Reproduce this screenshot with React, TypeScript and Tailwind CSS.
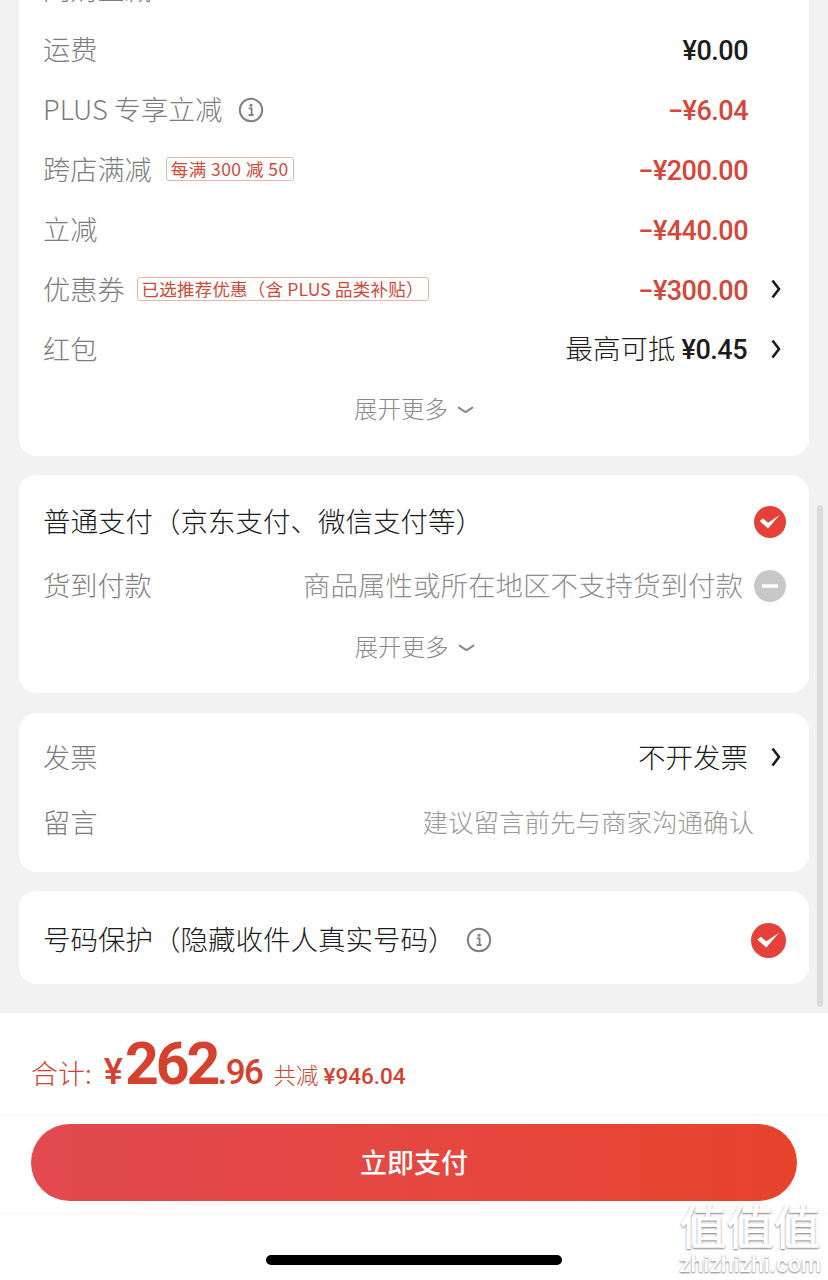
import type { ReactNode } from 'react';

const cjk = { fontFamily: '"Noto Sans CJK SC", sans-serif' };
const num = { fontFamily: 'Roboto, sans-serif' };

function Tag({ children, wide }: { children: ReactNode; wide?: boolean }) {
  return (
    <span className={`mb-[2px] flex h-6 items-center rounded-[3px] border border-[#e8b5ad] px-[4px] text-[17.5px] leading-none whitespace-pre text-[#d04a38] ${wide ? 'ml-[14px] tracking-[0.45px]' : 'ml-[12px] tracking-[0.2px]'}`}>
      {children}
    </span>
  );
}

function InfoIcon() {
  return (
    <svg width="26" height="26" viewBox="0 0 26 26" fill="none" className="text-[#808080]">
      <circle cx="13" cy="13" r="11.2" stroke="currentColor" strokeWidth="2" />
      <circle cx="13" cy="8.2" r="1.5" fill="currentColor" />
      <path d="M10.8 11.4h2.8v6.2M10.6 18h5" stroke="currentColor" strokeWidth="1.8" />
    </svg>
  );
}

function Arrow() {
  return (
    <svg width="10" height="20" viewBox="0 0 10 20" fill="none" className="mb-[2px] ml-[23px] mr-[1px]">
      <path d="M1.5 1.5 8 10 1.5 18.5" stroke="#1c1c1c" strokeWidth="2.6" />
    </svg>
  );
}

function Check({ size = 32 }: { size?: number }) {
  return (
    <svg width={size} height={size} viewBox="0 0 32 32">
      <circle cx="16" cy="16" r="16" fill="#e6403a" />
      <path d="M5.7 15 9 12.5 14 16.7 25.7 9 14 22.5Z" fill="#fff" />
    </svg>
  );
}

function Amount({ children, red }: { children: ReactNode; red?: boolean }) {
  return (
    <span className={`mt-[2px] text-[27px] font-medium tracking-[-0.5px] ${red ? 'text-[#d4473a]' : 'text-[#1c1c1c]'}`} style={num}>
      {children}
    </span>
  );
}

function Row({ label, tag, wide, info, right, arrow }: { label: string; tag?: string; wide?: boolean; info?: boolean; right: ReactNode; arrow?: boolean }) {
  return (
    <div className="flex h-[60px] items-center pl-6 pr-[27px]">
      <span className="mb-[4px] text-[27.2px] font-light whitespace-pre text-[#7d7d7d]">{label}</span>
      {info && <span className="ml-[15px] flex"><InfoIcon /></span>}
      {tag && <Tag wide={wide}>{tag}</Tag>}
      <div className={`ml-auto flex items-center ${arrow ? '' : 'mr-[34px]'}`}>
        {right}
        {arrow && <Arrow />}
      </div>
    </div>
  );
}

function More({ className }: { className: string }) {
  return (
    <div className={`flex items-center justify-center pb-[2px] text-[23.5px] font-light text-[#8a8a8a] ${className}`}>
      展开更多
      <svg width="17" height="8" viewBox="0 0 17 8" className="ml-[9px] mt-[2px]">
        <path d="M1 1.2c2.5 1.6 5 3.6 7.5 4.8C11 4.8 13.500 2.800 16 1.200" fill="none" stroke="#8a8a8a" strokeWidth="2" />
      </svg>
    </div>
  );
}

export default function App() {
  return (
    <div className="relative flex h-[1280px] w-[828px] flex-col overflow-hidden bg-[#f2f2f2]" style={cjk}>
      <div className="flex-1 overflow-hidden px-[19px]">
        <div className="-mt-[40px] rounded-b-[18px] bg-white pb-[16px]">
          <Row label="闪购立减" right={null} />
          <Row label="运费" right={<Amount>¥0.00</Amount>} />
          <Row label="PLUS 专享立减" info right={<Amount red>−¥6.04</Amount>} />
          <Row label="跨店满减" tag="每满 300 减 50" wide right={<Amount red>−¥200.00</Amount>} />
          <Row label="立减" right={<Amount red>−¥440.00</Amount>} />
          <Row label="优惠券" tag="已选推荐优惠（含 PLUS 品类补贴）" arrow right={<Amount red>−¥300.00</Amount>} />
          <Row
            label="红包"
            arrow
            right={
              <span className="mb-[3px] mr-[1px] text-[27.5px] font-light text-[#1c1c1c]">
                最高可抵 <span className="text-[27px] font-medium tracking-[-0.5px]" style={num}>¥0.45</span>
              </span>
            }
          />
          <More className="h-[60px]" />
        </div>

        <div className="mt-[19px] rounded-[18px] bg-white pb-[15px] pl-6 pr-[23px] pt-[15px]">
          <div className="flex h-[64px] items-center justify-between">
            <span className="mb-[2px] text-[27.5px] font-light text-[#1c1c1c]">普通支付（京东支付、微信支付等）</span>
            <Check />
          </div>
          <div className="flex h-[64px] items-center">
            <span className="mb-[4px] text-[27.2px] font-light text-[#808080]">货到付款</span>
            <span className="mb-[2px] ml-auto mr-[11px] text-[27.5px] font-light text-[#8e8e8e]">商品属性或所在地区不支持货到付款</span>
            <svg width="32" height="32" viewBox="0 0 32 32">
              <circle cx="16" cy="16" r="16" fill="#c8c8c8" />
              <path d="M8 16h16" stroke="#fff" strokeWidth="3.4" />
            </svg>
          </div>
          <More className="h-[60px]" />
        </div>

        <div className="mt-[20px] rounded-[18px] bg-white pb-[14px] pt-[15px]">
          <Row label="发票" arrow right={<span className="mb-[2px] text-[27.5px] font-light text-[#1c1c1c]">不开发票</span>} />
          <div className="flex h-[70px] items-center pl-6 pr-[55px]">
            <span className="mb-[4px] text-[27.2px] font-light text-[#7d7d7d]">留言</span>
            <span className="mb-[4px] ml-auto text-[25.5px] font-light text-[#9a9a9a]">建议留言前先与商家沟通确认</span>
          </div>
        </div>

        <div className="mt-[19px] flex h-[93px] items-center rounded-[18px] bg-white pl-6 pr-[23px] pt-[5px]">
          <span className="mb-[2px] text-[27.5px] font-light text-[#1c1c1c]">号码保护（隐藏收件人真实号码）</span>
          <span className="ml-[10px] flex"><InfoIcon /></span>
          <span className="ml-auto flex"><Check size={35} /></span>
        </div>
      </div>

      <div className="flex h-[267px] shrink-0 flex-col bg-white">
        <div className="flex h-[103px] items-baseline border-b border-[#f7f7f7] pl-[31px] pt-[13px] text-[#d4422f]">
          <span className="text-[27px] font-light">合计:</span>
          <span className="ml-[12px] text-[36px] font-medium" style={num}>¥</span>
          <span className="ml-[2px] text-[59px] font-bold leading-[76px] tracking-[-3px]" style={num}>262</span>
          <span className="text-[35px] font-medium tracking-[-1.5px]" style={num}>.96</span>
          <span className="ml-[11px] text-[22.5px] font-light">共减</span>
          <span className="ml-[5px] text-[22.5px] font-medium" style={num}>¥946.04</span>
        </div>
        <div className="flex h-[98px] items-start border-b border-[#f9f9f9] px-[31px] pt-[8px]">
          <button className="flex h-[77px] w-full items-center justify-center rounded-full bg-gradient-to-r from-[#e24a50] to-[#e8432b] text-[27px] font-medium text-white">
            立即支付
          </button>
        </div>
        <div className="flex flex-1 justify-center pt-[41px]">
          <div className="h-[10px] w-[296px] rounded-full bg-black" />
        </div>
      </div>

      {/* scrollbar */}
      <div className="absolute left-[817px] top-[505px] h-[502px] w-[6px] rounded-full bg-[#dcdcdc]" />

      {/* watermark */}
      <div className="absolute left-[675px] top-[1197px] flex w-[150px] flex-col items-center text-white [text-shadow:0_1px_2px_rgba(70,70,70,0.7)]">
        <span className="text-[47px] font-medium leading-[53px] whitespace-nowrap">值值值</span>
        <span className="mt-[2px] text-[23px] font-medium leading-[26px] whitespace-nowrap" style={num}>zhizhizhi.com</span>
      </div>
    </div>
  );
}
